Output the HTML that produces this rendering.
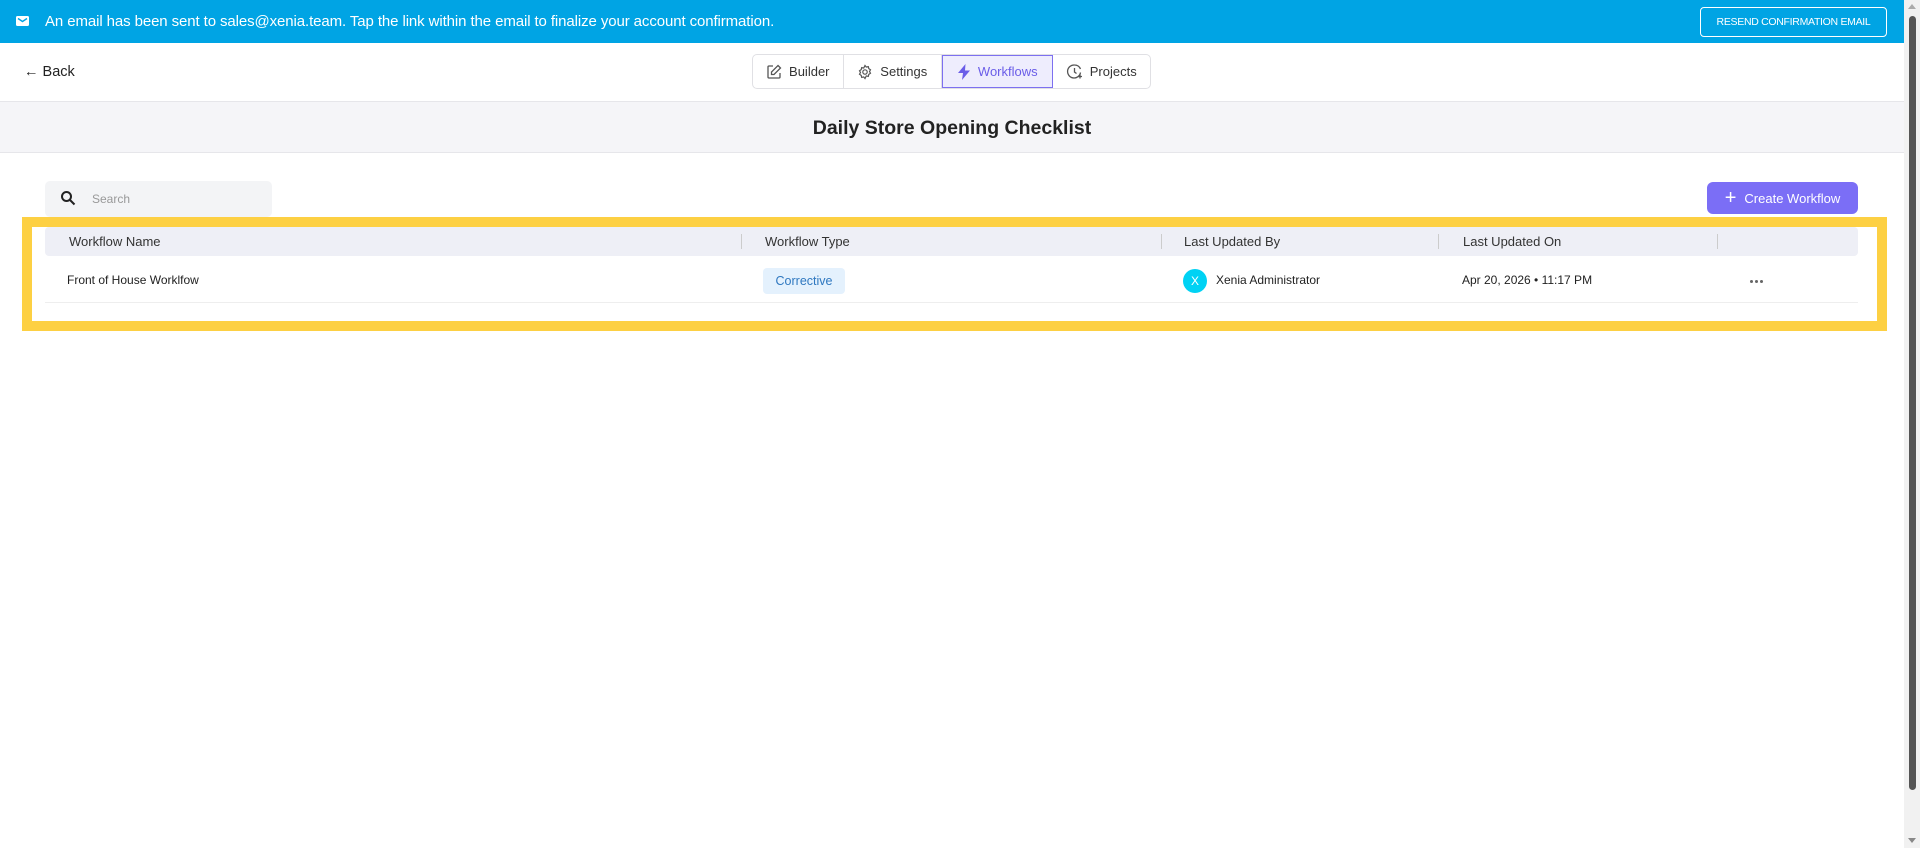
<!DOCTYPE html>
<html><head><meta charset="utf-8"><style>
*{box-sizing:border-box;margin:0;padding:0}
body{width:1920px;height:848px;overflow:hidden;background:#fff;font-family:"Liberation Sans",sans-serif;color:#222;position:relative}
.abs{position:absolute}
.banner{left:0;top:0;width:1904px;height:43px;background:#00a4e4;color:#fff}
.resend{left:1700px;top:7px;width:187px;height:30px;border:1.5px solid #fff;border-radius:4px;color:#fff;font-size:10.5px;display:flex;align-items:center;justify-content:center;letter-spacing:-0.3px}
.tabs{left:752px;top:54px;width:399px;height:35px;border:1px solid #e0e0e4;border-radius:5px;display:flex;overflow:hidden}
.tab{display:flex;align-items:center;justify-content:center;gap:7px;font-size:13px;color:#333;border-right:1px solid #e0e0e4}
.tab:last-child{border-right:none}
.tab.on{background:#eeedfd;color:#6a5de8;border:1px solid #7d70f0}
.hdr{left:45px;top:227px;width:1813px;height:29px;background:#eeeff6;border-radius:4px}
.ht{top:227px;height:29px;line-height:29px;font-size:13px;color:#333}
.sep{top:234px;width:1px;height:15px;background:#ccc}
.rt{top:270px;font-size:12px;color:#222;line-height:20px}
</style></head><body>
<div class="abs banner">
  <svg class="abs" style="left:16px;top:15px" width="13" height="12" viewBox="0 0 13 12"><rect x="0" y="1" width="13" height="10" rx="1.5" fill="#fff"/><path d="M2 3.5l4.5 3 4.5-3" stroke="#00a4e4" stroke-width="1.4" fill="none"/></svg>
  <div class="abs" style="left:45px;top:13px;font-size:15px;letter-spacing:-0.1px">An email has been sent to sales@xenia.team. Tap the link within the email to finalize your account confirmation.</div>
  <div class="abs resend">RESEND CONFIRMATION EMAIL</div>
</div>
<div class="abs" style="left:1904px;top:0;width:16px;height:848px;background:#f1f1f1"></div>
<div class="abs" style="left:1909px;top:16px;width:7px;height:774px;background:#555;border-radius:4px"></div>
<div class="abs" style="left:1908px;top:838px;width:0;height:0;border-left:4px solid transparent;border-right:4px solid transparent;border-top:5px solid #888"></div>
<div class="abs" style="left:1908px;top:4px;width:0;height:0;border-left:4px solid transparent;border-right:4px solid transparent;border-bottom:5px solid #aaa"></div>

<div class="abs" style="left:24px;top:64px;font-size:14.5px;color:#222">&#8592; Back</div>
<div class="abs tabs">
  <div class="tab" style="width:91px"><svg width="16" height="16" viewBox="0 0 16 16" fill="none" stroke="#555" stroke-width="1.3"><path d="M7 2H3a1 1 0 0 0-1 1v10a1 1 0 0 0 1 1h10a1 1 0 0 0 1-1V9"/><path d="M12 1.5l2.5 2.5L8 10.5H5.5V8z"/></svg>Builder</div>
  <div class="tab" style="width:99px"><svg width="16" height="16" viewBox="0 0 16 16" fill="none" stroke="#555" stroke-width="1.2"><circle cx="8" cy="8" r="2.2"/><path d="M8 1.5l1.3 1.6 2-.5.5 2 1.7 1.2-1 1.7 1 1.7-1.7 1.2-.5 2-2-.5L8 14.5l-1.3-1.6-2 .5-.5-2L2.5 10.2l1-1.7-1-1.7 1.7-1.2.5-2 2 .5z"/></svg>Settings</div>
  <div class="tab on" style="width:111px"><svg width="14" height="16" viewBox="0 0 14 16"><path d="M8.5 0L1 9h5l-1 7 8-9.5H8z" fill="#6a5de8"/></svg>Workflows</div>
  <div class="tab" style="width:98px"><svg width="17" height="17" viewBox="0 0 17 17" fill="none" stroke="#555" stroke-width="1.3"><path d="M14.5 9.5A6.5 6.5 0 1 1 8.5 2a6.5 6.5 0 0 1 6 4"/><path d="M8.5 5v4l2 1.5"/><path d="M12 13.5h4M14 11.5v4"/></svg>Projects</div>
</div>
<div class="abs" style="left:0;top:101px;width:1904px;height:52px;background:#f5f5f8;border-top:1px solid #e6e6ea;border-bottom:1px solid #e6e6ea"></div>
<div class="abs" style="left:0;top:117px;width:1904px;text-align:center;font-size:19.5px;font-weight:bold;color:#222">Daily Store Opening Checklist</div>

<div class="abs" style="left:45px;top:181px;width:227px;height:36px;background:#f3f4f6;border-radius:5px"></div>
<svg class="abs" style="left:60px;top:190px" width="16" height="16" viewBox="0 0 16 16" fill="none" stroke="#222" stroke-width="2"><circle cx="6.5" cy="6.5" r="4.5"/><path d="M10 10l4.5 4.5"/></svg>
<div class="abs" style="left:92px;top:192px;font-size:12px;color:#999">Search</div>
<div class="abs" style="left:1707px;top:182px;width:151px;height:32px;background:#7b6ef6;border-radius:6px;color:#fff;font-size:13px;display:flex;align-items:center;justify-content:center;gap:8px"><span style="font-size:20px;line-height:1;font-weight:300">+</span>Create Workflow</div>

<div class="abs hdr"></div>
<div class="abs ht" style="left:69px">Workflow Name</div>
<div class="abs sep" style="left:741px"></div>
<div class="abs ht" style="left:765px">Workflow Type</div>
<div class="abs sep" style="left:1161px"></div>
<div class="abs ht" style="left:1184px">Last Updated By</div>
<div class="abs sep" style="left:1438px"></div>
<div class="abs ht" style="left:1463px">Last Updated On</div>
<div class="abs sep" style="left:1717px"></div>

<div class="abs rt" style="left:67px">Front of House Worklfow</div>
<div class="abs" style="left:763px;top:268px;width:82px;height:26px;background:#e4f1fd;border-radius:4px;color:#2f78c0;font-size:12.5px;line-height:26px;text-align:center">Corrective</div>
<div class="abs" style="left:1183px;top:269px;width:24px;height:24px;border-radius:50%;background:#00d2f4;color:#fff;font-size:12px;line-height:24px;text-align:center">X</div>
<div class="abs rt" style="left:1216px">Xenia Administrator</div>
<div class="abs rt" style="left:1462px">Apr 20, 2026 • 11:17 PM</div>
<div class="abs" style="left:1750px;top:280px;width:3px;height:3px;border-radius:50%;background:#666;box-shadow:5px 0 #666,10px 0 #666"></div>
<div class="abs" style="left:45px;top:302px;width:1813px;height:1px;background:#eee"></div>

<div class="abs" style="left:22px;top:217px;width:1865px;height:114px;border:10px solid #fdd043"></div>
</body></html>
